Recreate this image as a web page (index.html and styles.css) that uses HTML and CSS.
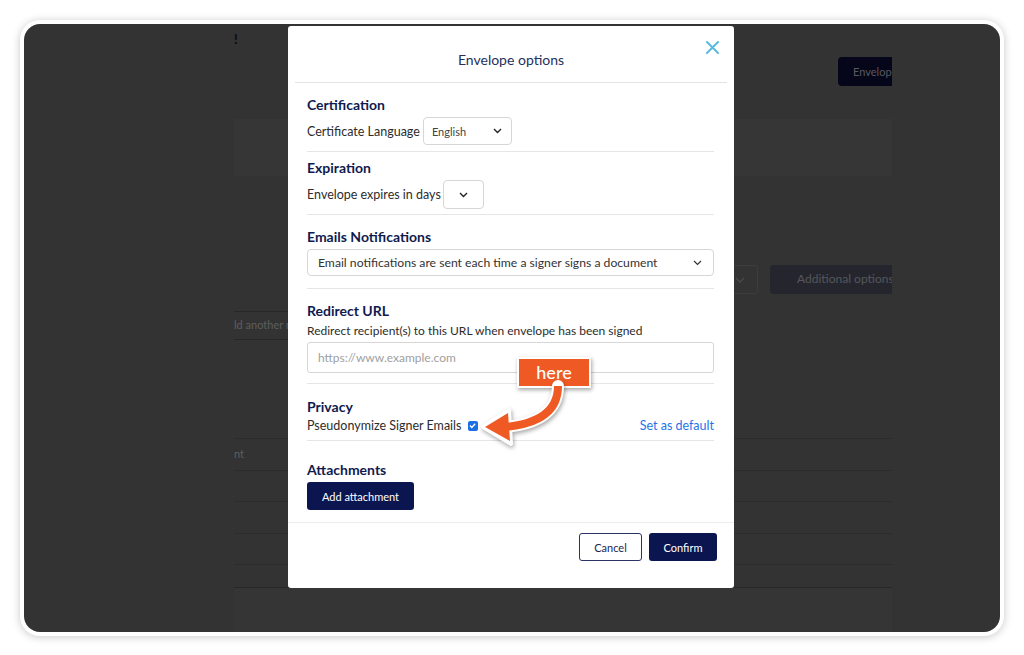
FILE: index.html
```html
<!DOCTYPE html>
<html>
<head>
<meta charset="utf-8">
<link rel="stylesheet" href="styles.css">
</head>
<body>
<div class="frame">
  <div class="screen">
    <div class="app">
      <div class="app-top"><span class="bang">!</span><span class="btn-env">Envelop</span></div>
      <div class="app-card"></div>
      <div class="app-opts"><span class="app-select"><svg width="10" height="6" viewBox="0 0 10 6"><path d="M1 1l4 4 4-4" fill="none" stroke="#4a4a4a" stroke-width="1.3"/></svg></span><span class="btn-add">Additional options</span></div>
      <div class="app-addrow">ld another r</div>
      <div class="app-table">
        <div class="trow">nt</div>
        <div class="trow"></div>
        <div class="trow"></div>
        <div class="trow"></div>
        <div class="trow trow-last"></div>
      </div>
      <div class="app-foot"></div>
    </div>

    <div class="modal">
      <div class="m-head">
        <span class="m-title">Envelope options</span>
        <svg class="m-close" width="13" height="13" viewBox="0 0 13 13"><path d="M1 1l11 11M12 1L1 12" stroke="#5bbadf" stroke-width="2" stroke-linecap="round"/></svg>
      </div>
      <div class="m-body">
        <div class="sec sec-cert">
          <h3>Certification</h3>
          <div class="row">
            <span class="lbl">Certificate Language</span>
            <span class="sel sel-lang">English<svg width="9" height="6" viewBox="0 0 9 6"><path d="M1 1l3.5 3.5L8 1" fill="none" stroke="#222" stroke-width="1.4"/></svg></span>
          </div>
        </div>
        <div class="sec sec-exp">
          <h3>Expiration</h3>
          <div class="row">
            <span class="lbl">Envelope expires in days</span>
            <span class="sel sel-days"><svg width="9" height="6" viewBox="0 0 9 6"><path d="M1 1l3.5 3.5L8 1" fill="none" stroke="#222" stroke-width="1.4"/></svg></span>
          </div>
        </div>
        <div class="sec sec-mail">
          <h3>Emails Notifications</h3>
          <div class="sel sel-wide">Email notifications are sent each time a signer signs a document<svg width="9" height="6" viewBox="0 0 9 6"><path d="M1 1l3.5 3.5L8 1" fill="none" stroke="#333" stroke-width="1.2"/></svg></div>
        </div>
        <div class="sec sec-url">
          <h3>Redirect URL</h3>
          <div class="desc">Redirect recipient(s) to this URL when envelope has been signed</div>
          <div class="input">https://www.example.com</div>
        </div>
        <div class="sec sec-priv">
          <h3>Privacy</h3>
          <div class="row row-priv">
            <span class="lbl">Pseudonymize Signer Emails</span>
            <span class="check"><svg width="9" height="9" viewBox="0 0 9 9"><path d="M2 4.6l1.8 1.8L7.2 2.8" fill="none" stroke="#fff" stroke-width="1.4"/></svg></span>
            <span class="link">Set as default</span>
          </div>
        </div>
        <div class="sec sec-att">
          <h3>Attachments</h3>
          <span class="btn btn-dark btn-att">Add attachment</span>
        </div>
      </div>
      <div class="m-foot">
        <span class="btn btn-light">Cancel</span>
        <span class="btn btn-dark btn-conf">Confirm</span>
      </div>
    </div>

    <div class="badge">here</div>
    <svg class="arrow" width="110" height="80" viewBox="0 0 110 80">
      <g class="arrow-g">
        <path d="M88 6 C 88 30, 70 44, 34 47" fill="none" stroke="#fff" stroke-width="12" stroke-linecap="round"/>
        <polygon points="13,47 39,30 41,64" fill="#fff" stroke="#fff" stroke-width="4" stroke-linejoin="round"/>
        <path d="M88 6 C 88 30, 70 44, 34 47" fill="none" stroke="#ef5a24" stroke-width="8"/>
        <polygon points="15,47 38,33 40,61" fill="#ef5a24"/>
      </g>
    </svg>
  </div>
</div>
</body>
</html>
```
FILE: styles.css
```css
* { box-sizing: border-box; margin: 0; padding: 0; }
body {
  background: #fff;
  width: 1024px;
  height: 655px;
  overflow: hidden;
  font-family: "Lato", "Noto Sans", sans-serif;
}
.frame {
  margin: 20px 0 0 20px;
  width: 984px;
  height: 616px;
  border-radius: 20px;
  background: #fff;
  padding: 4px;
  box-shadow: 0 1px 8px rgba(0,0,0,0.22);
}
.screen {
  position: relative;
  width: 976px;
  height: 608px;
  background: #333333;
  border-radius: 16px;
  overflow: hidden;
}
/* dimmed app behind */
.app {
  margin-left: 210px;
  width: 658px;
  display: flex;
  flex-direction: column;
}
.app-top {
  height: 95px;
  position: relative;
  display: flex;
  justify-content: space-between;
  align-items: flex-start;
}
.bang {
  color: #0a0a0a;
  font-size: 13px;
  font-weight: 700;
  margin-top: 7px;
}
.btn-env {
  margin-top: 33px;
  width: 54px;
  height: 29px;
  background: #05061a;
  border-radius: 4px 0 0 4px;
  color: #58595f;
  font-size: 11px;
  padding: 8px 0 0 15px;
  overflow: hidden;
  white-space: nowrap;
}
.app-card {
  height: 57px;
  background: #363636;
}
.app-opts {
  margin-top: 89px;
  height: 31px;
  display: flex;
  justify-content: flex-end;
  gap: 12px;
}
.app-select {
  width: 30px;
  height: 29px;
  border: 1px solid #3c3c3c;
  border-left: none;
  border-radius: 0 3px 3px 0;
  display: flex;
  align-items: center;
  justify-content: center;
  padding-right: 6px;
}
.btn-add {
  width: 122px;
  height: 29px;
  background: #25262d;
  border-radius: 3px 0 0 3px;
  color: #55565b;
  font-size: 12px;
  padding: 6px 0 0 27px;
  white-space: nowrap;
  overflow: hidden;
}
.app-addrow {
  margin-top: 15px;
  width: 54px;
  height: 29px;
  border-top: 1px solid #272727;
  border-bottom: 1px solid #272727;
  color: #5e5e5e;
  font-size: 11px;
  padding-top: 6px;
  white-space: nowrap;
  overflow: hidden;
}
.app-table {
  margin-top: 98px;
  border-top: 1px solid #2c2c2c;
}
.trow {
  height: 31.5px;
  border-bottom: 1px solid #2c2c2c;
  color: #5e5e5e;
  font-size: 11px;
  padding-top: 8px;
}
.trow-last { height: 23px; border-bottom-color: #272727; }
.app-foot {
  height: 44px;
  background: #353535;
}
/* modal */
.modal {
  position: absolute;
  left: 264px;
  top: 2px;
  width: 446px;
  height: 562px;
  background: #fff;
  border-radius: 3px;
  display: flex;
  flex-direction: column;
}
.m-head {
  position: relative;
  height: 57px;
  margin: 0 7px 0 7px;
  border-bottom: 1px solid #e4e4e4;
  display: flex;
  justify-content: center;
  align-items: center;
  padding-top: 10px;
}
.m-title {
  font-size: 14px;
  color: #24305e;
}
.m-close {
  position: absolute;
  right: 8px;
  top: 15px;
}
.m-body {
  padding: 0 20px 0 19px;
  flex: 1;
}
.sec { border-bottom: 1px solid #e6e6e6; }
.sec h3 {
  font-size: 14px;
  line-height: 18px;
  font-weight: 700;
  color: #0f1b4f;
}
.row {
  display: flex;
  align-items: center;
}
.lbl {
  font-size: 12.5px;
  color: #2c2c2c;
}
.sel {
  border: 1px solid #d6d6d6;
  border-radius: 4px;
  display: flex;
  align-items: center;
  justify-content: space-between;
  color: #444;
}
.sec-cert { padding-top: 13px; height: 69px; }
.sec-cert .row { margin-top: 3px; }
.sel-lang {
  margin-left: 3px;
  width: 89px;
  height: 28px;
  font-size: 11px;
  padding: 0 9px 0 8px;
}
.sec-exp { padding-top: 7px; height: 63px; }
.sec-exp .row { margin-top: 3px; }
.sel-days {
  margin-left: 2px;
  width: 41px;
  height: 29px;
  justify-content: center;
}
.sec-mail { padding-top: 13px; height: 74px; }
.sel-wide {
  margin-top: 3px;
  height: 27px;
  font-size: 12.2px;
  color: #333;
  padding: 0 11px 0 10px;
}
.sec-url { padding-top: 13px; height: 95px; }
.desc {
  font-size: 12px;
  line-height: 16px;
  margin-top: 3px;
  color: #2c2c2c;
}
.input {
  margin-top: 3px;
  height: 31px;
  border: 1px solid #d6d6d6;
  border-radius: 3px;
  font-size: 12px;
  color: #a0a0a0;
  padding: 7px 0 0 10px;
}
.sec-priv { padding-top: 14px; height: 57px; }
.row-priv { margin-top: 2px; }
.check {
  margin-left: 7px;
  width: 10px;
  height: 10px;
  background: #1a6fe5;
  border-radius: 2px;
  display: flex;
}
.link {
  margin-left: auto;
  font-size: 12.5px;
  color: #1e73e8;
}
.sec-att { padding-top: 20px; border-bottom: none; }
.btn {
  display: inline-flex;
  align-items: center;
  justify-content: center;
  height: 28px;
  border-radius: 3px;
  font-size: 11px;
}
.btn-dark { background: #0b1650; color: #fff; }
.btn-att { width: 107px; margin-top: 3px; }
.m-foot {
  height: 66px;
  border-top: 1px solid #ececec;
  display: flex;
  justify-content: flex-end;
  align-items: flex-start;
  padding: 10px 17px 0 0;
  gap: 7px;
}
.btn-light {
  width: 63px;
  border: 1px solid #2a3363;
  color: #1c2550;
  background: #fff;
}
.btn-conf { width: 68px; }
/* annotation */
.badge {
  position: absolute;
  left: 493px;
  top: 333px;
  width: 74px;
  height: 31px;
  background: #ef5a24;
  border: 2px solid #fff;
  color: #fff;
  font-size: 18px;
  font-weight: 500;
  display: flex;
  align-items: center;
  justify-content: center;
  padding-bottom: 2px;
  box-shadow: 1px 2px 4px rgba(0,0,0,0.35);
}
.arrow {
  position: absolute;
  left: 446px;
  top: 356px;
}
.arrow-g { filter: drop-shadow(1px 2px 2px rgba(0,0,0,0.35)); }
```
